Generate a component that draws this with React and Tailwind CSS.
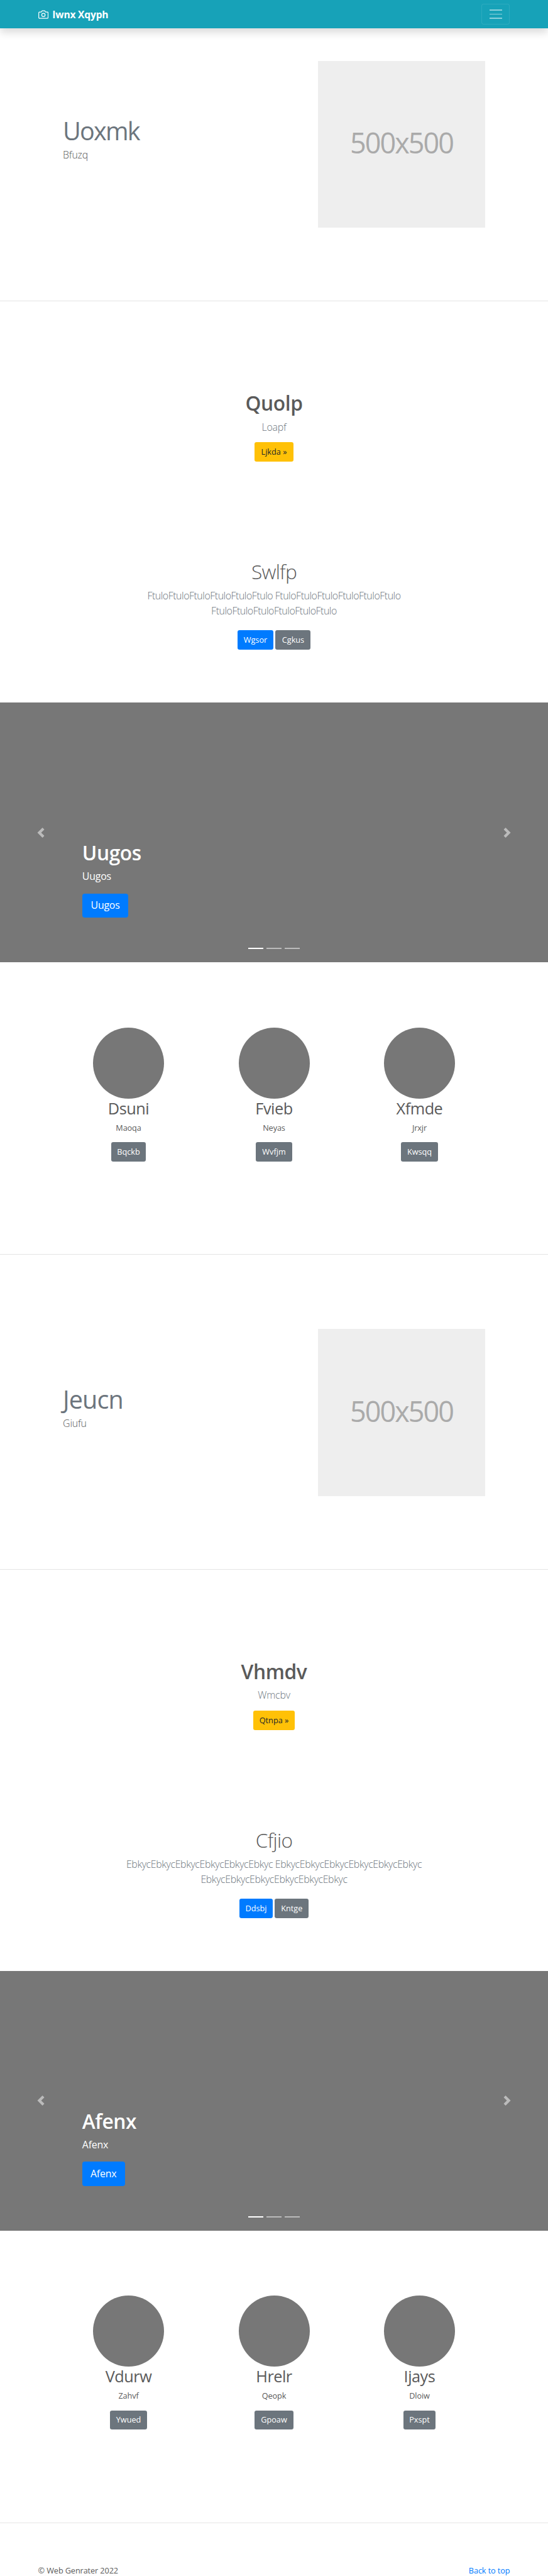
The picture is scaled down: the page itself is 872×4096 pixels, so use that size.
import React from "react";

function CameraIcon() {
  return (
    <svg
      viewBox="0 0 24 24"
      className="h-[16.2px] w-[16.2px]"
      fill="none"
      stroke="currentColor"
      strokeWidth="1.8"
      strokeLinecap="round"
      strokeLinejoin="round"
    >
      <path d="M23 19a2 2 0 0 1-2 2H3a2 2 0 0 1-2-2V8a2 2 0 0 1 2-2h4l2-3h6l2 3h4a2 2 0 0 1 2 2z" />
      <circle cx="12" cy="13" r="4" />
    </svg>
  );
}

function Navbar() {
  return (
    <header className="relative z-10 flex h-[45.2px] items-center justify-between bg-[#17a2b8] px-[60.6px] shadow-[0_6.5px_13px_rgba(0,0,0,0.15)]">
      <a className="flex items-center gap-[6.5px] text-white">
        <CameraIcon />
        <strong className="text-[15.6px] leading-[24px] font-bold tracking-[-0.2px]">Iwnx Xqyph</strong>
      </a>
      <button className="flex h-[32.3px] w-[45.2px] flex-col items-center justify-center gap-[4.8px] rounded-[3.2px] border border-white/10">
        <span className="h-[1.6px] w-[19.4px] bg-white/50" />
        <span className="h-[1.6px] w-[19.4px] bg-white/50" />
        <span className="h-[1.6px] w-[19.4px] bg-white/50" />
      </button>
    </header>
  );
}

function Hero({ title, text, className, tracking }) {
  return (
    <section className={"flex items-start justify-between border-b border-black/10 pr-[100.2px] pl-[100.1px] " + className}>
      <div className="pt-[87.4px]">
        <h2 className={"text-[39.5px] leading-[48px] text-[#6c757d] " + tracking}>{title}</h2>
        <p className="mt-[2.2px] text-[15.9px] leading-[24px] font-light tracking-[-0.2px]">{text}</p>
      </div>
      <div className="flex h-[265.6px] w-[265.8px] items-center justify-center bg-[#eee] pb-[5px] text-[45px] leading-[60px] font-medium tracking-[-2px] text-[#aaa]">
        500x500
      </div>
    </section>
  );
}

const button = "flex h-[30.7px] items-center justify-center rounded-[3.2px] text-[12.7px] leading-[19.4px] ";

function Promo({ data }) {
  return (
    <section className="flex h-[637.7px] flex-col items-center pt-[142.7px] text-center">
      <h1 className="text-[31.7px] leading-[38.4px] font-semibold tracking-[-0.4px]">{data.title}</h1>
      <p className="mt-[6.2px] text-[15.9px] leading-[24px] font-light tracking-[-0.2px] text-[#6c757d]">{data.text}</p>
      <a className={button + "mt-[12.8px] bg-[#ffc107] text-[#212529] " + data.ctaWidth}>{data.cta}</a>
      <h1 className="mt-[155.9px] text-[31.7px] leading-[38.4px] font-light tracking-[-0.7px]">{data.subtitle}</h1>
      <p className={"mt-[6.7px] text-[15.9px] leading-[24.2px] font-light text-[#6c757d] " + data.tracking}>
        {data.line1}
        <br />
        {data.line2}
      </p>
      <div className="mt-[18.8px] flex gap-[3px]">
        <a className={button + "bg-[#007bff] text-white " + data.primaryWidth}>{data.primary}</a>
        <a className={button + "bg-[#6c757d] text-white " + data.secondaryWidth}>{data.secondary}</a>
      </div>
    </section>
  );
}

function Chevron({ flip }) {
  return (
    <svg viewBox="0 0 8 8" className="h-[16.1px] w-[16.1px]" fill="#fff" fillOpacity="0.5">
      <path
        d={
          flip
            ? "M2.75 0l-1.5 1.5 2.5 2.5-2.5 2.5 1.5 1.5 4-4-4-4z"
            : "M5.25 0l-4 4 4 4 1.5-1.5-2.5-2.5 2.5-2.5-1.5-1.5z"
        }
      />
    </svg>
  );
}

function Carousel({ text, btnWidth }) {
  return (
    <section className="relative h-[413.4px] bg-[#777] px-[130.8px] pt-[220px] text-white">
      <div className="absolute inset-y-0 left-0 flex w-[130.8px] items-center justify-center">
        <Chevron />
      </div>
      <div className="absolute inset-y-0 right-0 flex w-[130.8px] items-center justify-center">
        <Chevron flip />
      </div>
      <h1 className="text-[31.7px] leading-[38.4px] font-semibold tracking-[-0.4px]">{text}</h1>
      <p className="mt-[5.7px] text-[15.9px] leading-[24px] font-medium tracking-[-0.2px]">{text}</p>
      <a
        className={
          "mt-[15.4px] flex h-[38.8px] items-center justify-center rounded-[3.9px] bg-[#007bff] text-[15.9px] font-medium tracking-[-0.2px] " +
          btnWidth
        }
      >
        {text}
      </a>
      <div className="absolute inset-x-0 bottom-[21px] flex justify-center gap-[4.8px]">
        <span className="h-[2.4px] w-[24.2px] bg-white" />
        <span className="h-[2.4px] w-[24.2px] bg-white/50" />
        <span className="h-[2.4px] w-[24.2px] bg-white/50" />
      </div>
    </section>
  );
}

function Features({ items }) {
  return (
    <section className="grid h-[465px] grid-cols-3 border-b border-black/10 px-[88.8px] pt-[103.3px]">
      {items.map((item) => (
        <div key={item.name} className="flex flex-col items-center">
          <div className="h-[113px] w-[113px] rounded-full bg-[#777]" />
          <h2 className="text-[25.3px] leading-[31px] tracking-[-0.5px]">{item.name}</h2>
          <p className="mt-[5.9px] text-[12.7px] leading-[19.4px] tracking-[-0.1px]">{item.text}</p>
          <a className={button + "mt-[12.9px] bg-[#6c757d] text-white " + item.width}>{item.action}</a>
        </div>
      ))}
    </section>
  );
}

const promoA = {
  title: "Quolp",
  text: "Loapf",
  cta: "Ljkda »",
  ctaWidth: "w-[61.4px]",
  subtitle: "Swlfp",
  line1: "FtuloFtuloFtuloFtuloFtuloFtulo FtuloFtuloFtuloFtuloFtuloFtulo",
  line2: "FtuloFtuloFtuloFtuloFtuloFtulo",
  tracking: "tracking-[-0.46px]",
  primary: "Wgsor",
  primaryWidth: "w-[57.9px]",
  secondary: "Cgkus",
  secondaryWidth: "w-[56px]",
};

const promoB = {
  title: "Vhmdv",
  text: "Wmcbv",
  cta: "Qtnpa »",
  ctaWidth: "w-[66.6px]",
  subtitle: "Cfjio",
  line1: "EbkycEbkycEbkycEbkycEbkycEbkyc EbkycEbkycEbkycEbkycEbkycEbkyc",
  line2: "EbkycEbkycEbkycEbkycEbkycEbkyc",
  tracking: "tracking-[-0.38px]",
  primary: "Ddsbj",
  primaryWidth: "w-[53.6px]",
  secondary: "Kntge",
  secondaryWidth: "w-[54px]",
};

const featuresA = [
  { name: "Dsuni", text: "Maoqa", action: "Bqckb", width: "w-[55.6px]" },
  { name: "Fvieb", text: "Neyas", action: "Wvfjm", width: "w-[58px]" },
  { name: "Xfmde", text: "Jrxjr", action: "Kwsqq", width: "w-[58.3px]" },
];

const featuresB = [
  { name: "Vdurw", text: "Zahvf", action: "Ywued", width: "w-[59px]" },
  { name: "Hrelr", text: "Qeopk", action: "Gpoaw", width: "w-[61.2px]" },
  { name: "Ijays", text: "Dloiw", action: "Pxspt", width: "w-[51.8px]" },
];

export default function App() {
  return (
    <div className="h-[4096px] w-[872px] overflow-hidden bg-white font-['Open_Sans','Noto_Sans',sans-serif] text-[#5a5a5a]">
      <Navbar />
      <Hero title="Uoxmk" text="Bfuzq" className="h-[434.2px] pt-[51.7px]" tracking="tracking-[-1.8px]" />
      <Promo data={promoA} />
      <Carousel text="Uugos" btnWidth="w-[73.5px]" />
      <Features items={featuresA} />
      <Hero title="Jeucn" text="Giufu" className="h-[500.6px] pt-[117.9px]" tracking="tracking-[-0.9px]" />
      <Promo data={promoB} />
      <Carousel text="Afenx" btnWidth="w-[67.8px]" />
      <Features items={featuresB} />
      <footer className="flex justify-between px-[60.6px] pt-[67.1px] text-[12.7px] leading-[16px] tracking-[-0.1px]">
        <p>© Web Genrater 2022</p>
        <a className="text-[#007bff]">Back to top</a>
      </footer>
    </div>
  );
}
